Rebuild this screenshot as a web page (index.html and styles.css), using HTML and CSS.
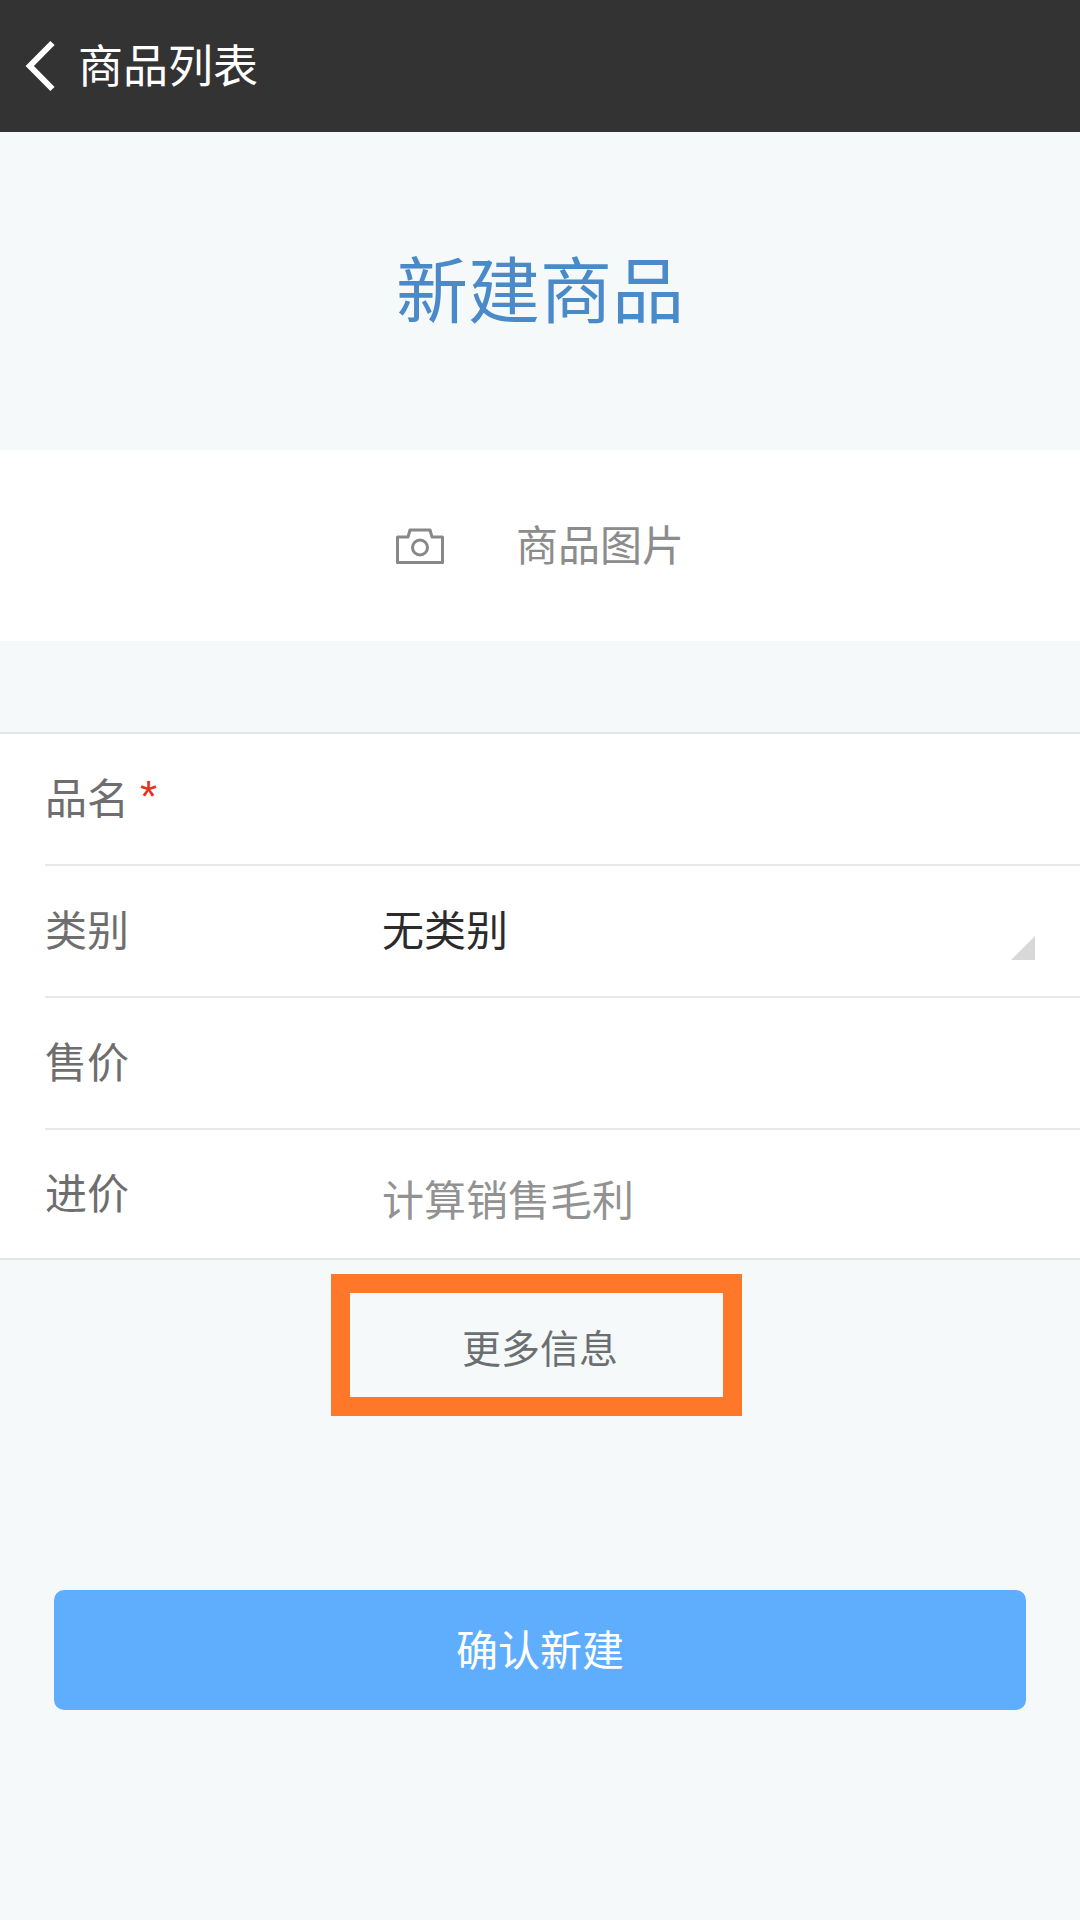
FILE: index.html
```html
<!DOCTYPE html>
<html lang="zh-CN">
<head>
<meta charset="utf-8">
<title>新建商品</title>
<link rel="stylesheet" href="styles.css">
</head>
<body>
<div class="page">
  <header class="topbar">
    <svg class="back" viewBox="0 0 36 56" width="36" height="56"><path d="M30.5 5 L7.8 28 L30.5 51" fill="none" stroke="#fff" stroke-width="6"/></svg>
    <span class="topbar-title">商品列表</span>
  </header>
  <h1 class="heading">新建商品</h1>
  <section class="photo">
    <svg class="camera" viewBox="0 0 48 36" width="48" height="36"><path d="M1.5 34.5 V9 H12 L14 2 H34 L36 9 H46.5 V34.5 Z" fill="none" stroke="#888" stroke-width="3" stroke-linejoin="round"/><circle cx="24" cy="19.5" r="7.5" fill="none" stroke="#888" stroke-width="3"/></svg>
    <span class="photo-label">商品图片</span>
  </section>
  <section class="form">
    <div class="row">
      <div class="row-inner"><span class="label">品名</span><span class="req">*</span></div>
    </div>
    <div class="row">
      <div class="row-inner">
        <span class="label">类别</span><span class="value">无类别</span>
        <span class="corner"></span>
      </div>
    </div>
    <div class="row">
      <div class="row-inner"><span class="label">售价</span></div>
    </div>
    <div class="row">
      <div class="row-inner last"><span class="label">进价</span><span class="value hint">计算销售毛利</span></div>
    </div>
  </section>
  <div class="more">
    <span class="more-text">更多信息</span>
    <div class="annotation"></div>
  </div>
  <div class="submit-wrap">
    <button class="submit">确认新建</button>
  </div>
</div>
</body>
</html>
```
FILE: styles.css
```css
* { box-sizing: border-box; }
html, body { margin: 0; padding: 0; }
body {
  font-family: "Noto Sans CJK SC", "Noto Sans", sans-serif;
  font-weight: 400;
  background: #f5f9fa;
}
.page { width: 1080px; height: 1920px; overflow: hidden; background: #f5f9fa; }
.topbar {
  height: 132px;
  background: #333;
  display: flex;
  align-items: center;
  padding-left: 22px;
  color: #fff;
}
.back { display: block; margin-right: 20px; }
.topbar-title { font-size: 45px; line-height: 60px; margin-bottom: 5px; }
.heading {
  margin: 0;
  height: 318px;
  padding-bottom: 12px;
  display: flex;
  align-items: center;
  justify-content: center;
  font-size: 72px;
  font-weight: 400;
  color: #4a8ac8;
}
.photo {
  height: 191px;
  background: #fff;
  display: flex;
  align-items: center;
  padding-left: 396px;
  color: #8c8c8c;
}
.camera { display: block; margin-right: 72px; margin-top: 1px; }
.photo-label { font-size: 42px; margin-bottom: 7px; }
.form {
  margin-top: 91px;
  background: #fff;
  border-top: 2px solid #e4e7e8;
  border-bottom: 2px solid #e4e7e8;
}
.row { padding-left: 45px; }
.row-inner {
  position: relative;
  height: 132px;
  padding-bottom: 7px;
  display: flex;
  align-items: center;
  border-bottom: 2px solid #e6e8e9;
}
.row-inner.last { height: 128px; border-bottom: 0; }
.label { width: 337px; font-size: 42px; color: #6e6e6e; flex: none; }
.req {
  position: absolute;
  left: 95px;
  top: 38px;
  font-size: 44px;
  line-height: 50px;
  font-weight: 400;
  color: #e8321e;
  font-family: "Liberation Sans", sans-serif;
}
.value { font-size: 42px; color: #2b2b2b; }
.hint { color: #929292; margin-top: 14px; }
.corner {
  position: absolute;
  right: 45px;
  bottom: 36px;
  width: 0;
  height: 0;
  border-style: solid;
  border-width: 0 0 24px 24px;
  border-color: transparent transparent #d8d8d8 transparent;
}
.more {
  position: relative;
  height: 179px;
  display: flex;
  justify-content: center;
  padding-top: 58px;
}
.more-text { font-size: 39px; line-height: 56px; color: #6c6f71; }
.annotation {
  position: absolute;
  left: 331px;
  top: 14px;
  width: 411px;
  height: 142px;
  border: 19px solid #ff7729;
}
.submit-wrap { margin-top: 151px; padding: 0 54px; }
.submit {
  display: block;
  width: 100%;
  height: 120px;
  padding: 0 0 5px;
  border: 0;
  border-radius: 10px;
  background: #5faefd;
  color: #fff;
  font-family: inherit;
  font-weight: 400;
  font-size: 42px;
}
```
